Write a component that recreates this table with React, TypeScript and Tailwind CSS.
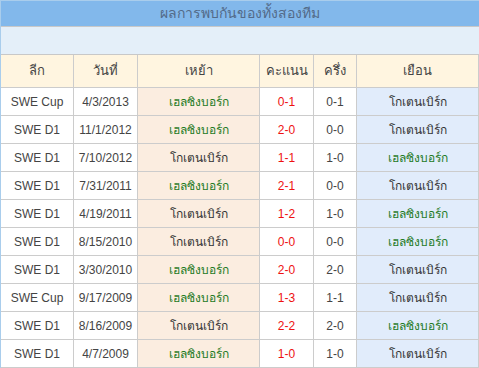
import React from "react";

type Row = {
  league: string;
  date: string;
  home: string;
  score: string;
  half: string;
  away: string;
};

const H = "เฮลซิงบอร์ก";
const G = "โกเตนเบิร์ก";

const rows: Row[] = [
  { league: "SWE Cup", date: "4/3/2013", home: H, score: "0-1", half: "0-1", away: G },
  { league: "SWE D1", date: "11/1/2012", home: H, score: "2-0", half: "0-0", away: G },
  { league: "SWE D1", date: "7/10/2012", home: G, score: "1-1", half: "1-0", away: H },
  { league: "SWE D1", date: "7/31/2011", home: H, score: "2-1", half: "0-0", away: G },
  { league: "SWE D1", date: "4/19/2011", home: G, score: "1-2", half: "1-0", away: H },
  { league: "SWE D1", date: "8/15/2010", home: G, score: "0-0", half: "0-0", away: H },
  { league: "SWE D1", date: "3/30/2010", home: H, score: "2-0", half: "2-0", away: G },
  { league: "SWE Cup", date: "9/17/2009", home: H, score: "1-3", half: "1-1", away: G },
  { league: "SWE D1", date: "8/16/2009", home: G, score: "2-2", half: "2-0", away: H },
  { league: "SWE D1", date: "4/7/2009", home: H, score: "1-0", half: "1-0", away: G },
];

const teamColor = (t: string) => (t === H ? "text-[#1e7a1e]" : "text-[#333333]");

export default function App() {
  return (
    <div
      className="w-[479px] h-[368px] overflow-hidden bg-white border-l border-t border-[#a9cdec] text-[12px] text-[#444444]"
      style={{ fontFamily: '"Liberation Sans", Tahoma, "Noto Sans", sans-serif' }}
    >
      <div className="h-[26px] bg-[#82b8eb] border-b border-[#c8c8c8] flex items-center justify-center text-[14px] text-[#536a88]">
        ผลการพบกันของทั้งสองทีม
      </div>
      <div className="h-[28px] bg-[#e4eff9] border-b border-[#c8c8c8]" />
      <div className="grid grid-cols-[73px_64px_122px_54px_43px_122px]">
        {["ลีก", "วันที่", "เหย้า", "คะแนน", "ครึ่ง", "เยือน"].map((h) => (
          <div
            key={h}
            className="h-[33px] bg-[#fff5e0] border-r border-b border-[#cccccc] flex items-center justify-center text-[13px] text-[#444444]"
          >
            {h}
          </div>
        ))}
        {rows.map((r, i) => (
          <React.Fragment key={i}>
            <div className="h-[28px] border-r border-b border-[#cccccc] flex items-center justify-center">
              {r.league}
            </div>
            <div className="h-[28px] border-r border-b border-[#cccccc] flex items-center justify-center">
              {r.date}
            </div>
            <div
              className={`h-[28px] bg-[#fbede0] border-r border-b border-[#cccccc] flex items-center justify-center ${teamColor(r.home)}`}
            >
              {r.home}
            </div>
            <div className="h-[28px] border-r border-b border-[#cccccc] flex items-center justify-center text-[#ee1111]">
              {r.score}
            </div>
            <div className="h-[28px] border-r border-b border-[#cccccc] flex items-center justify-center">
              {r.half}
            </div>
            <div
              className={`h-[28px] bg-[#e1ecfb] border-r border-b border-[#cccccc] flex items-center justify-center ${teamColor(r.away)}`}
            >
              {r.away}
            </div>
          </React.Fragment>
        ))}
      </div>
    </div>
  );
}
